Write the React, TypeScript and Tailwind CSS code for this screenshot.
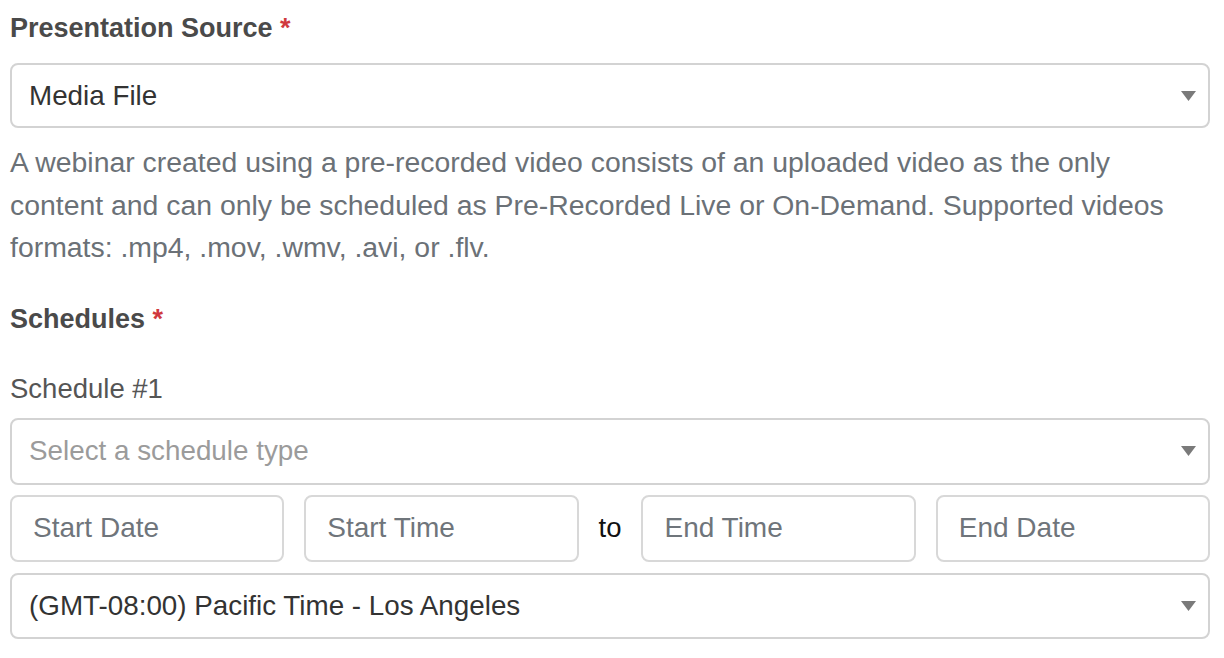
import React from "react";

function Caret() {
  return (
    <svg width="15" height="10" viewBox="0 0 15 10" className="shrink-0">
      <path d="M0 0 L15 0 L7.5 10 Z" fill="#7a7a7a" />
    </svg>
  );
}

function SelectBox({
  value,
  placeholder,
  height,
}: {
  value?: string;
  placeholder?: string;
  height: string;
}) {
  return (
    <div
      className={`flex ${height} w-full items-center justify-between rounded-[8px] border-2 border-[#d3d3d3] bg-white pr-[12px] pl-[17px] text-[27.8px]`}
    >
      {value ? (
        <span className="text-[#333333]">{value}</span>
      ) : (
        <span className="text-[#9b9b9b]">{placeholder}</span>
      )}
      <Caret />
    </div>
  );
}

function TextBox({ placeholder }: { placeholder: string }) {
  return (
    <div className="flex h-[67px] flex-1 items-center rounded-[8px] border-2 border-[#d8d8d8] bg-white pl-[21px] text-[28px] text-[#6f757b]">
      {placeholder}
    </div>
  );
}

function Label({ text }: { text: string }) {
  return (
    <div className="h-[36px] text-[27px] leading-[36px] font-bold text-[#4a4a4a]">
      {text} <span className="text-[#d0393e]">*</span>
    </div>
  );
}

export default function App() {
  return (
    <div
      className="min-h-[658px] bg-white pt-[10px] pr-[14px] pl-[10px] text-[27.5px]"
      style={{ fontFamily: '"Liberation Sans", Arial, sans-serif' }}
    >
      <Label text="Presentation Source" />
      <div className="mt-[17px]">
        <SelectBox value="Media File" height="h-[65px]" />
      </div>
      <p className="mt-[13px] text-[28.4px] leading-[42.5px] text-[#6b7177]">
        A webinar created using a pre-recorded video consists of an uploaded
        video as the only
        <br />
        content and can only be scheduled as Pre-Recorded Live or On-Demand.
        Supported videos
        <br />
        formats: .mp4, .mov, .wmv, .avi, or .flv.
      </p>

      <div className="mt-[32px]">
        <Label text="Schedules" />
      </div>
      <div className="mt-[34px] h-[36px] leading-[36px] text-[#555555]">
        Schedule #1
      </div>
      <div className="mt-[11px]">
        <SelectBox placeholder="Select a schedule type" height="h-[67px]" />
      </div>
      <div className="mt-[10px] flex items-center gap-[20px]">
        <TextBox placeholder="Start Date" />
        <TextBox placeholder="Start Time" />
        <span className="text-[#111111]">to</span>
        <TextBox placeholder="End Time" />
        <TextBox placeholder="End Date" />
      </div>
      <div className="mt-[11px]">
        <SelectBox
          value="(GMT-08:00) Pacific Time - Los Angeles"
          height="h-[66px]"
        />
      </div>
    </div>
  );
}
